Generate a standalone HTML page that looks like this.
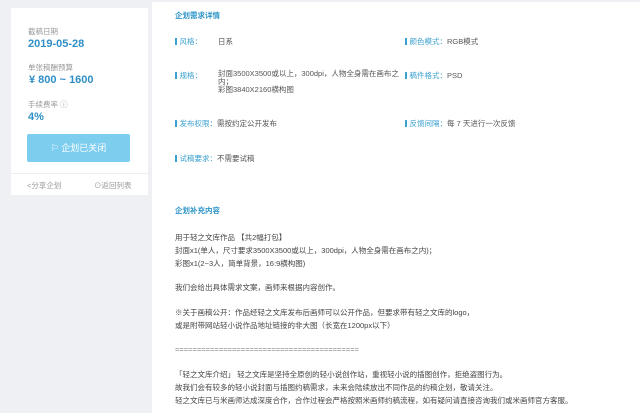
<!DOCTYPE html>
<html><head><meta charset="utf-8"><style>
*{margin:0;padding:0;box-sizing:border-box}
body{width:640px;height:413px;background:#eef0f4;font-family:"Liberation Sans","Noto Sans CJK SC",sans-serif;position:relative;overflow:hidden;color:#555}
.a{position:absolute;white-space:nowrap}
#card{position:absolute;left:11px;top:8px;width:137px;height:187px;background:#fff}
#main{position:absolute;left:152px;top:2px;width:488px;height:411px;background:#fff}
.lbl{font-size:7.5px;color:#999}
.big{font-size:11px;font-weight:bold;color:#2f8fc6}
.t{font-size:7.5px;color:#2e95c8;font-weight:bold}
.k{font-size:7.5px;color:#3aa0d0}
.k:before{content:"";display:inline-block;width:1.5px;height:7px;background:#3aa0d0;margin-right:3px;vertical-align:-1px}
.v{font-size:7.5px;color:#555}
.p{font-size:7.5px;color:#444}
</style></head><body>
<div id="card"></div>
<div id="main"></div>
<div class="a lbl" style="left:28px;top:26px">截稿日期</div>
<div class="a big" style="left:28px;top:38px">2019-05-28</div>
<div class="a lbl" style="left:28px;top:62px">单张稿酬预算</div>
<div class="a big" style="left:29px;top:74px">¥ 800 ~ 1600</div>
<div class="a lbl" style="left:28px;top:99px">手续费率 ⓘ</div>
<div class="a big" style="left:28px;top:111px">4%</div>
<div class="a" style="left:27px;top:134px;width:103px;height:28px;background:#7dcdef;border-radius:2px;color:#fff;font-size:9px;text-align:center;line-height:28px">⚐ 企划已关闭</div>
<div class="a" style="left:11px;top:173px;width:137px;height:1px;background:#eee"></div>
<div class="a lbl" style="left:27px;top:180px">&lt;分享企划</div>
<div class="a lbl" style="left:94px;top:180px">⊙返回列表</div>

<div class="a t" style="left:175px;top:10px">企划需求详情</div>
<div class="a k" style="left:175px;top:36px">风格：</div><div class="a v" style="left:218px;top:36px">日系</div>
<div class="a k" style="left:405px;top:36px">颜色模式：<span style="color:#555">RGB模式</span></div>
<div class="a k" style="left:175px;top:70px">规格：</div>
<div class="a v" style="left:218px;top:70px;line-height:8px">封面3500X3500或以上，300dpi，人物全身需在画布之<br>内；<br>彩图3840X2160横构图</div>
<div class="a k" style="left:405px;top:70px">稿件格式：<span style="color:#555">PSD</span></div>
<div class="a k" style="left:175px;top:118px">发布权限：<span style="color:#555">需按约定公开发布</span></div>
<div class="a k" style="left:405px;top:118px">反馈间隔：<span style="color:#555">每 7 天进行一次反馈</span></div>
<div class="a k" style="left:175px;top:153px">试稿要求：<span style="color:#555">不需要试稿</span></div>

<div class="a t" style="left:175px;top:205px">企划补充内容</div>
<div class="a p" style="left:175px;top:232px">用于轻之文库作品 【共2幅打包】</div>
<div class="a p" style="left:175px;top:245px">封面x1(单人，尺寸要求3500X3500或以上，300dpi，人物全身需在画布之内)；</div>
<div class="a p" style="left:175px;top:258px">彩图x1(2~3人，简单背景，16:9横构图)</div>
<div class="a p" style="left:175px;top:282px">我们会给出具体需求文案，画师来根据内容创作。</div>
<div class="a p" style="left:175px;top:307px">※关于画稿公开：作品经轻之文库发布后画师可以公开作品，但要求带有轻之文库的logo，</div>
<div class="a p" style="left:175px;top:320px">或是附带网站轻小说作品地址链接的非大图（长宽在1200px以下）</div>
<div class="a p" style="left:175px;top:345px;color:#888">==========================================</div>
<div class="a p" style="left:175px;top:369px">「轻之文库介绍」 轻之文库是坚持全原创的轻小说创作站，重视轻小说的插图创作，拒绝盗图行为。</div>
<div class="a p" style="left:175px;top:382px">故我们会有较多的轻小说封面与插图约稿需求，未来会陆续放出不同作品的约稿企划，敬请关注。</div>
<div class="a p" style="left:175px;top:395px">轻之文库已与米画师达成深度合作，合作过程会严格按照米画师约稿流程，如有疑问请直接咨询我们或米画师官方客服。</div>
</body></html>
